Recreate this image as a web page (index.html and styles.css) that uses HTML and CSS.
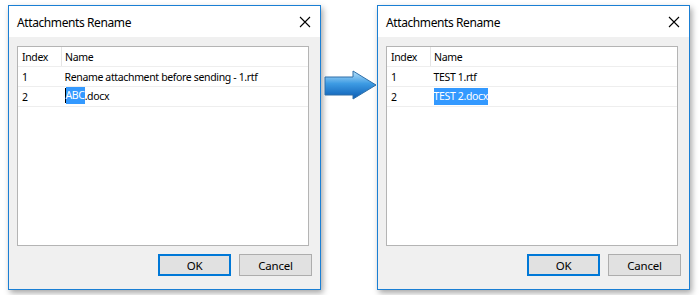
FILE: index.html
```html
<!DOCTYPE html>
<html lang="en">
  <head>
    <meta charset="UTF-8" />
    <title>Attachments Rename</title>
    <link rel="stylesheet" href="styles.css">
  </head>

  <body>
    <div class="stage">
      <div class="dialog">
        <div class="titlebar">
          <span class="title">Attachments Rename</span>
          <svg class="close" width="12" height="12" viewBox="0 0 12 12">
            <path d="M1 1 L11 11 M11 1 L1 11" stroke="#000" stroke-width="1.1" fill="none" />
          </svg>
        </div>
        <div class="body">
          <div class="listbox">
            <table class="grid">
              <tr class="hrow">
                <th class="idx">Index</th>
                <th>Name</th>
              </tr>
              <tr>
                <td class="idx">1</td>
                <td>Rename attachment before sending - 1.rtf</td>
              </tr>
              <tr>
                <td class="idx">2</td>
                <td><span class="edit"><span class="caret"></span><span class="sel">ABC</span>.docx</span></td>
              </tr>
            </table>
          </div>
          <div class="buttons">
            <button class="btn default">OK</button>
            <button class="btn">Cancel</button>
          </div>
        </div>
      </div>

      <div class="arrow">
        <svg width="56" height="40" viewBox="0 0 56 40">
          <defs>
            <linearGradient id="blue" x1="0" y1="0" x2="0" y2="1">
              <stop offset="0" stop-color="#b9e2fa" />
              <stop offset="0.45" stop-color="#3d9be3" />
              <stop offset="1" stop-color="#0b5cb4" />
            </linearGradient>
          </defs>
          <polygon points="4,10 32,10 32,4 55,18 32,32 32,28 4,28" fill="url(#blue)" stroke="#2e6fa8" stroke-width="1" stroke-linejoin="round" />
        </svg>
      </div>

      <div class="dialog">
        <div class="titlebar">
          <span class="title">Attachments Rename</span>
          <svg class="close" width="12" height="12" viewBox="0 0 12 12">
            <path d="M1 1 L11 11 M11 1 L1 11" stroke="#000" stroke-width="1.1" fill="none" />
          </svg>
        </div>
        <div class="body">
          <div class="listbox">
            <table class="grid">
              <tr class="hrow">
                <th class="idx">Index</th>
                <th>Name</th>
              </tr>
              <tr>
                <td class="idx">1</td>
                <td>TEST 1.rtf</td>
              </tr>
              <tr>
                <td class="idx">2</td>
                <td><span class="edit"><span class="sel">TEST 2.docx</span></span></td>
              </tr>
            </table>
          </div>
          <div class="buttons">
            <button class="btn default">OK</button>
            <button class="btn">Cancel</button>
          </div>
        </div>
      </div>
    </div>
  </body>
</html>
```

FILE: styles.css
```css
body {
  margin: 0;
  padding: 5px 8px;
  background: #fff;
  font-family: "Noto Sans", "Open Sans", sans-serif;
  font-size: 10.5px;
  letter-spacing: -0.35px;
  color: #000;
}
.stage {
  display: flex;
  align-items: flex-start;
}
.dialog {
  width: 311px;
  height: 283px;
  border: 1px solid #1a7fd4;
  background: #f0f0f0;
  box-shadow: 2px 3px 6px rgba(0, 0, 0, 0.35);
  display: flex;
  flex-direction: column;
}
.titlebar {
  height: 31px;
  background: #fff;
  display: flex;
  align-items: center;
  justify-content: space-between;
  padding: 0 9px 0 8px;
}
.title {
  font-size: 12px;
  letter-spacing: -0.4px;
  margin-top: 1px;
}
.close {
  display: block;
}
.body {
  flex: 1;
  display: flex;
  flex-direction: column;
  padding: 9px 8px 13px 8px;
}
.listbox {
  height: 198px;
  margin-right: 3px;
  border: 1px solid #b4b4b4;
  background: #fff;
}
.grid {
  width: 100%;
  border-collapse: collapse;
}
.grid th,
.grid td {
  height: 19px;
  padding: 0 0 0 3px;
  text-align: left;
  font-weight: normal;
  border-bottom: 1px solid #eeeeee;
  white-space: nowrap;
}
.grid .idx {
  width: 39px;
  padding-left: 4px;
  border-right: 1px solid #e5e5e5;
}
.grid td.idx {
  border-right: none;
}
.edit {
  display: inline-flex;
  align-items: center;
  height: 17px;
}
.caret {
  width: 1px;
  height: 15px;
  background: #000;
}
.sel {
  background: #3399ff;
  color: #fff;
  line-height: 17px;
}
.buttons {
  margin-top: 8px;
  display: flex;
  justify-content: flex-end;
  gap: 8px;
}
.btn {
  width: 73px;
  height: 22px;
  background: #e1e1e1;
  border: 1px solid #adadad;
  font-family: "Noto Sans", "Open Sans", sans-serif;
  font-size: 11.5px;
  letter-spacing: -0.2px;
  color: #000;
  padding: 0;
}
.btn.default {
  border: 2px solid #0078d7;
}
.arrow {
  width: 56px;
  padding-top: 62px;
}
.arrow svg {
  display: block;
}
```
